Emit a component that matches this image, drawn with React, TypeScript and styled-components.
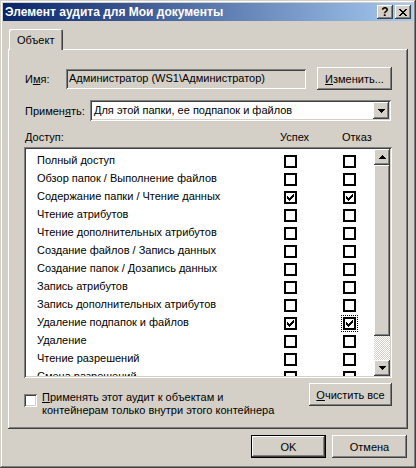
import styled, { createGlobalStyle } from 'styled-components';

const GlobalStyle = createGlobalStyle`
  html, body {
    margin: 0;
    padding: 0;
    background: #d4d0c8;
  }
  * {
    box-sizing: border-box;
  }
`;

const FACE = '#d4d0c8';
const raised = `inset -1px -1px #404040, inset 1px 1px #ffffff, inset -2px -2px #808080, inset 2px 2px ${FACE}`;
const sunken = `inset 1px 1px #808080, inset -1px -1px #ffffff, inset 2px 2px #404040, inset -2px -2px ${FACE}`;

const Window = styled.div`
  width: 416px;
  height: 468px;
  padding: 3px;
  background: ${FACE};
  box-shadow: inset -1px -1px #404040, inset 1px 1px ${FACE}, inset -2px -2px #808080, inset 2px 2px #ffffff;
  display: flex;
  flex-direction: column;
  font-family: 'Liberation Sans', Arial, sans-serif;
  font-size: 11px;
  color: #000;
`;

const TitleBar = styled.div`
  height: 18px;
  display: flex;
  align-items: center;
  padding: 0 2px 0 2px;
  background: linear-gradient(to right, #0a246a, #a6caf0);
  color: #fff;
  font-size: 12px;
  font-weight: bold;
`;

const TitleText = styled.span`
  flex: 1;
  white-space: nowrap;
`;

const CaptionButton = styled.div<{ $gap?: boolean }>`
  width: 16px;
  height: 14px;
  margin-left: ${(p) => (p.$gap ? '2px' : '0')};
  background: ${FACE};
  box-shadow: ${raised};
  display: flex;
  align-items: center;
  justify-content: center;
  color: #000;
  font-size: 12px;
  font-weight: bold;
  line-height: 1;
`;

const Body = styled.div`
  flex: 1;
  display: flex;
  flex-direction: column;
  padding: 8px 5px 0 5px;
`;

const TabStrip = styled.div`
  display: flex;
  padding-left: 1px;
  position: relative;
  z-index: 1;
  margin-bottom: -1px;
`;

const Tab = styled.div`
  height: 21px;
  padding: 0 9px 0 8px;
  display: flex;
  align-items: center;
  background: ${FACE};
  border-radius: 2px 2px 0 0;
  box-shadow: inset 1px 1px #ffffff, inset -1px 0 #404040, inset -2px 0 #808080;
`;

const Panel = styled.div`
  width: 400px;
  height: 380px;
  padding: 18px 16px 0 16px;
  box-shadow: inset -1px -1px #404040, inset 1px 1px #ffffff, inset -2px -2px #808080;
  display: flex;
  flex-direction: column;
`;

const FormRow = styled.div<{ $top?: number; $height: number }>`
  display: flex;
  align-items: center;
  height: ${(p) => p.$height}px;
  margin-top: ${(p) => p.$top ?? 0}px;
`;

const Label = styled.span<{ $width: number }>`
  width: ${(p) => p.$width}px;
  padding-left: 1px;
  white-space: nowrap;
`;

const ReadOnlyField = styled.div`
  width: 240px;
  height: 20px;
  padding: 3px 3px 0 3px;
  background: ${FACE};
  box-shadow: ${sunken};
  white-space: nowrap;
`;

const Button = styled.div<{ $width: number; $default?: boolean }>`
  width: ${(p) => p.$width}px;
  height: 23px;
  flex-shrink: 0;
  display: flex;
  align-items: center;
  justify-content: center;
  background: ${FACE};
  box-shadow: ${(p) =>
    p.$default
      ? `inset 0 0 0 1px #000, inset -2px -2px #404040, inset 2px 2px #ffffff, inset -3px -3px #808080`
      : raised};
  white-space: nowrap;
`;

const Combo = styled.div`
  width: 301px;
  height: 21px;
  padding: 2px;
  background: #fff;
  box-shadow: ${sunken};
  display: flex;
  align-items: stretch;
`;

const ComboText = styled.span`
  flex: 1;
  padding: 2px 0 0 2px;
  white-space: nowrap;
`;

const ArrowButton = styled.div<{ $height: number }>`
  width: 16px;
  height: ${(p) => p.$height}px;
  flex-shrink: 0;
  background: ${FACE};
  box-shadow: ${raised};
  display: flex;
  align-items: center;
  justify-content: center;
`;

const Headers = styled.div`
  display: grid;
  grid-template-columns: 255px 62px auto;
  height: 13px;
  line-height: 13px;
  margin-top: 10px;
  margin-bottom: 3px;
  padding-left: 1px;
`;

const ListBox = styled.div`
  height: 231px;
  padding: 2px;
  background: #fff;
  box-shadow: ${sunken};
  display: flex;
`;

const Rows = styled.div`
  flex: 1;
  overflow: hidden;
  padding-top: 2px;
`;

const Row = styled.div`
  display: flex;
  align-items: flex-start;
  height: 18px;
  line-height: 18px;
  padding-left: 11px;
`;

const RowLabel = styled.span`
  width: 247px;
  white-space: nowrap;
`;

const FlatCheck = styled.div<{ $focus?: boolean }>`
  width: 13px;
  height: 13px;
  margin-top: 4px;
  border: 2px solid #000;
  background: #fff;
  display: flex;
  align-items: center;
  justify-content: center;
  outline: ${(p) => (p.$focus ? '1px dotted #000' : 'none')};
  outline-offset: 1px;
`;

const CheckColumn = styled.div`
  width: 59px;
  display: flex;
`;

const ScrollBar = styled.div`
  width: 16px;
  display: flex;
  flex-direction: column;
`;

const Thumb = styled.div`
  height: 171px;
  background: ${FACE};
  box-shadow: ${raised};
`;

const Track = styled.div`
  flex: 1;
  background: repeating-conic-gradient(${FACE} 0 25%, #ffffff 0 50%) 0 0 / 2px 2px;
`;

const BottomRow = styled.div`
  display: flex;
  align-items: flex-start;
  margin-top: 5px;
`;

const Check3D = styled.div`
  width: 13px;
  height: 13px;
  margin-top: 11px;
  flex-shrink: 0;
  background: #fff;
  box-shadow: ${sunken};
`;

const CheckText = styled.div`
  flex: 1;
  margin: 8px 0 0 5px;
  line-height: 13px;
`;

const Footer = styled.div`
  display: flex;
  justify-content: flex-end;
  gap: 6px;
  margin-top: 6px;
  padding-right: 1px;
`;

const CHECK_PATH =
  'M6 0h1v1h-1zM5 1h2v1h-2zM0 2h1v1h-1zM4 2h3v1h-3zM0 3h2v1h-2zM3 3h3v1h-3zM0 4h5v1h-5zM1 5h3v1h-3zM2 6h1v1h-1z';

function CheckMark() {
  return (
    <svg width="7" height="7" viewBox="0 0 7 7" shapeRendering="crispEdges">
      <path d={CHECK_PATH} fill="#000" />
    </svg>
  );
}

function Arrow({ up }: { up?: boolean }) {
  return (
    <svg width="7" height="4" viewBox="0 0 7 4" shapeRendering="crispEdges">
      <path
        d={up ? 'M3 0h1v1h-1zM2 1h3v1h-3zM1 2h5v1h-5zM0 3h7v1h-7z' : 'M0 0h7v1h-7zM1 1h5v1h-5zM2 2h3v1h-3zM3 3h1v1h-1z'}
        fill="#000"
      />
    </svg>
  );
}

function CloseGlyph() {
  return (
    <svg width="8" height="7" viewBox="0 0 8 7" shapeRendering="crispEdges">
      <path
        d="M0 0h2v1h-2zM6 0h2v1h-2zM1 1h2v1h-2zM5 1h2v1h-2zM2 2h4v1h-4zM3 3h2v1h-2zM2 4h4v1h-4zM1 5h2v1h-2zM5 5h2v1h-2zM0 6h2v1h-2zM6 6h2v1h-2z"
        fill="#000"
      />
    </svg>
  );
}

type Perm = { name: string; ok?: boolean; fail?: boolean; focus?: boolean };

const perms: Perm[] = [
  { name: 'Полный доступ' },
  { name: 'Обзор папок / Выполнение файлов' },
  { name: 'Содержание папки / Чтение данных', ok: true, fail: true },
  { name: 'Чтение атрибутов' },
  { name: 'Чтение дополнительных атрибутов' },
  { name: 'Создание файлов / Запись данных' },
  { name: 'Создание папок / Дозапись данных' },
  { name: 'Запись атрибутов' },
  { name: 'Запись дополнительных атрибутов' },
  { name: 'Удаление подпапок и файлов', ok: true, fail: true, focus: true },
  { name: 'Удаление' },
  { name: 'Чтение разрешений' },
  { name: 'Смена разрешений' },
];

export default function App() {
  return (
    <>
      <GlobalStyle />
      <Window>
        <TitleBar>
          <TitleText>Элемент аудита для Мои документы</TitleText>
          <CaptionButton>?</CaptionButton>
          <CaptionButton $gap>
            <CloseGlyph />
          </CaptionButton>
        </TitleBar>
        <Body>
          <TabStrip>
            <Tab>Объект</Tab>
          </TabStrip>
          <Panel>
            <FormRow $height={23}>
              <Label $width={42}>
                И<u>м</u>я:
              </Label>
              <ReadOnlyField>Администратор (WS1\Администратор)</ReadOnlyField>
              <Button $width={75} style={{ marginLeft: 11 }}>
                <span>
                  <u>И</u>зменить...
                </span>
              </Button>
            </FormRow>
            <FormRow $height={21} $top={10}>
              <Label $width={66}>
                Примен<u>я</u>ть:
              </Label>
              <Combo>
                <ComboText>Для этой папки, ее подпапок и файлов</ComboText>
                <ArrowButton $height={17}>
                  <Arrow />
                </ArrowButton>
              </Combo>
            </FormRow>
            <Headers>
              <span>
                <u>Д</u>оступ:
              </span>
              <span>Успех</span>
              <span>Отказ</span>
            </Headers>
            <ListBox>
              <Rows>
                {perms.map((p) => (
                  <Row key={p.name}>
                    <RowLabel>{p.name}</RowLabel>
                    <CheckColumn>
                      <FlatCheck>{p.ok && <CheckMark />}</FlatCheck>
                    </CheckColumn>
                    <FlatCheck $focus={p.focus}>{p.fail && <CheckMark />}</FlatCheck>
                  </Row>
                ))}
              </Rows>
              <ScrollBar>
                <ArrowButton $height={16}>
                  <Arrow up />
                </ArrowButton>
                <Thumb />
                <Track />
                <ArrowButton $height={16}>
                  <Arrow />
                </ArrowButton>
              </ScrollBar>
            </ListBox>
            <BottomRow>
              <Check3D />
              <CheckText>
                <u>П</u>рименять этот аудит к объектам и
                <br />
                контейнерам только внутри этого контейнера
              </CheckText>
              <Button $width={83}>
                <span>
                  <u>О</u>чистить все
                </span>
              </Button>
            </BottomRow>
          </Panel>
          <Footer>
            <Button $width={75} $default>
              OK
            </Button>
            <Button $width={75}>Отмена</Button>
          </Footer>
        </Body>
      </Window>
    </>
  );
}
